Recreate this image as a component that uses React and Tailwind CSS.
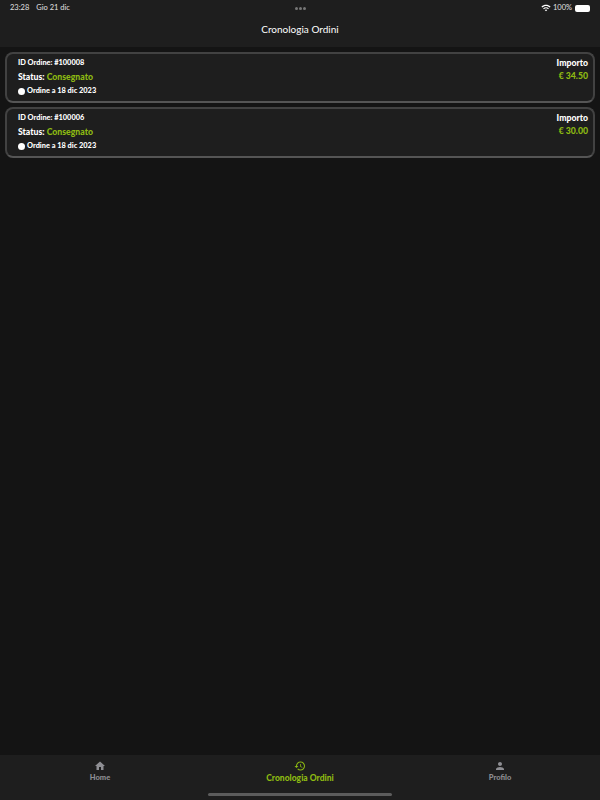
import React from 'react';
import { MdHome, MdHistory, MdPerson, MdWifi } from 'react-icons/md';

const orders = [
  { id: '#100008', date: 'Ordine a 18 dic 2023', total: '€ 34.50' },
  { id: '#100006', date: 'Ordine a 18 dic 2023', total: '€ 30.00' },
];

const tabs = [
  { label: 'Home', icon: MdHome },
  { label: 'Cronologia Ordini', icon: MdHistory, active: true },
  { label: 'Profilo', icon: MdPerson },
];

const OrderCard = ({ order }) => (
  <div className="h-[51px] rounded-lg border-2 border-[#424242] border-b-[#555555] bg-[#1e1e1e] pl-[11px] pr-[5px] pt-[3px] flex justify-between font-black">
    <div>
      <div className="text-[7.4px] leading-[12px] text-white">ID Ordine: {order.id}</div>
      <div className="text-[8.7px] leading-[12px] mt-[2px] text-white">
        Status: <span className="text-[#8dba12]">Consegnato</span>
      </div>
      <div className="flex items-center gap-[2px] text-[7.4px] leading-[12px] mt-[2px] text-white">
        <span className="w-[7px] h-[7px] rounded-full bg-white" />
        {order.date}
      </div>
    </div>
    <div className="text-right">
      <div className="text-[8.7px] leading-[12px] text-white">Importo</div>
      <div className="text-[8.7px] leading-[12px] mt-[1px] text-[#8dba12]">{order.total}</div>
    </div>
  </div>
);

export default function App() {
  return (
    <div className="w-[600px] h-[800px] flex flex-col bg-[#141414] text-white font-['Lato',sans-serif] overflow-hidden">
      {/* Header */}
      <div className="h-[47px] bg-[#1e1e1e] shrink-0 flex flex-col">
        <div className="h-[14px] mt-[1px] px-[10px] flex items-center justify-between text-[7.5px] text-[#e0e0e0]">
          <div className="flex gap-[7px] w-[120px]">
            <span>23:28</span>
            <span>Gio 21 dic</span>
          </div>
          <div className="flex gap-[1px]">
            <span className="w-[3px] h-[3px] rounded-full bg-[#777777]" />
            <span className="w-[3px] h-[3px] rounded-full bg-[#777777]" />
            <span className="w-[3px] h-[3px] rounded-full bg-[#777777]" />
          </div>
          <div className="flex items-center justify-end gap-[2px] w-[120px]">
            <MdWifi className="w-[10px] h-[10px] text-white" />
            <span>100%</span>
            <span className="ml-[1px] w-[15px] h-[7px] rounded-[2px] bg-white" />
          </div>
        </div>
        <div className="text-center text-[10px] leading-[14px] mt-[7px] text-white">Cronologia Ordini</div>
      </div>

      {/* Orders */}
      <div className="flex-1 px-[5px] pt-[5px] flex flex-col gap-[4px]">
        {orders.map((order) => (
          <OrderCard key={order.id} order={order} />
        ))}
      </div>

      {/* Tab bar */}
      <div className="h-[45px] bg-[#1e1e1e] shrink-0 relative">
        <div className="grid grid-cols-3 pt-[5px]">
          {tabs.map((tab) => (
            <div
              key={tab.label}
              className={`flex flex-col items-center font-black leading-[10px] ${tab.active ? 'text-[8.5px] text-[#8dba12]' : 'text-[7.5px] text-[#8e8e93]'}`}
            >
              <tab.icon className="w-[12px] h-[12px]" />
              <span className="mt-[1px]">{tab.label}</span>
            </div>
          ))}
        </div>
        <div className="absolute bottom-[4px] left-[208px] w-[184px] h-[3px] rounded-full bg-[#5c5c5c]" />
      </div>
    </div>
  );
}
